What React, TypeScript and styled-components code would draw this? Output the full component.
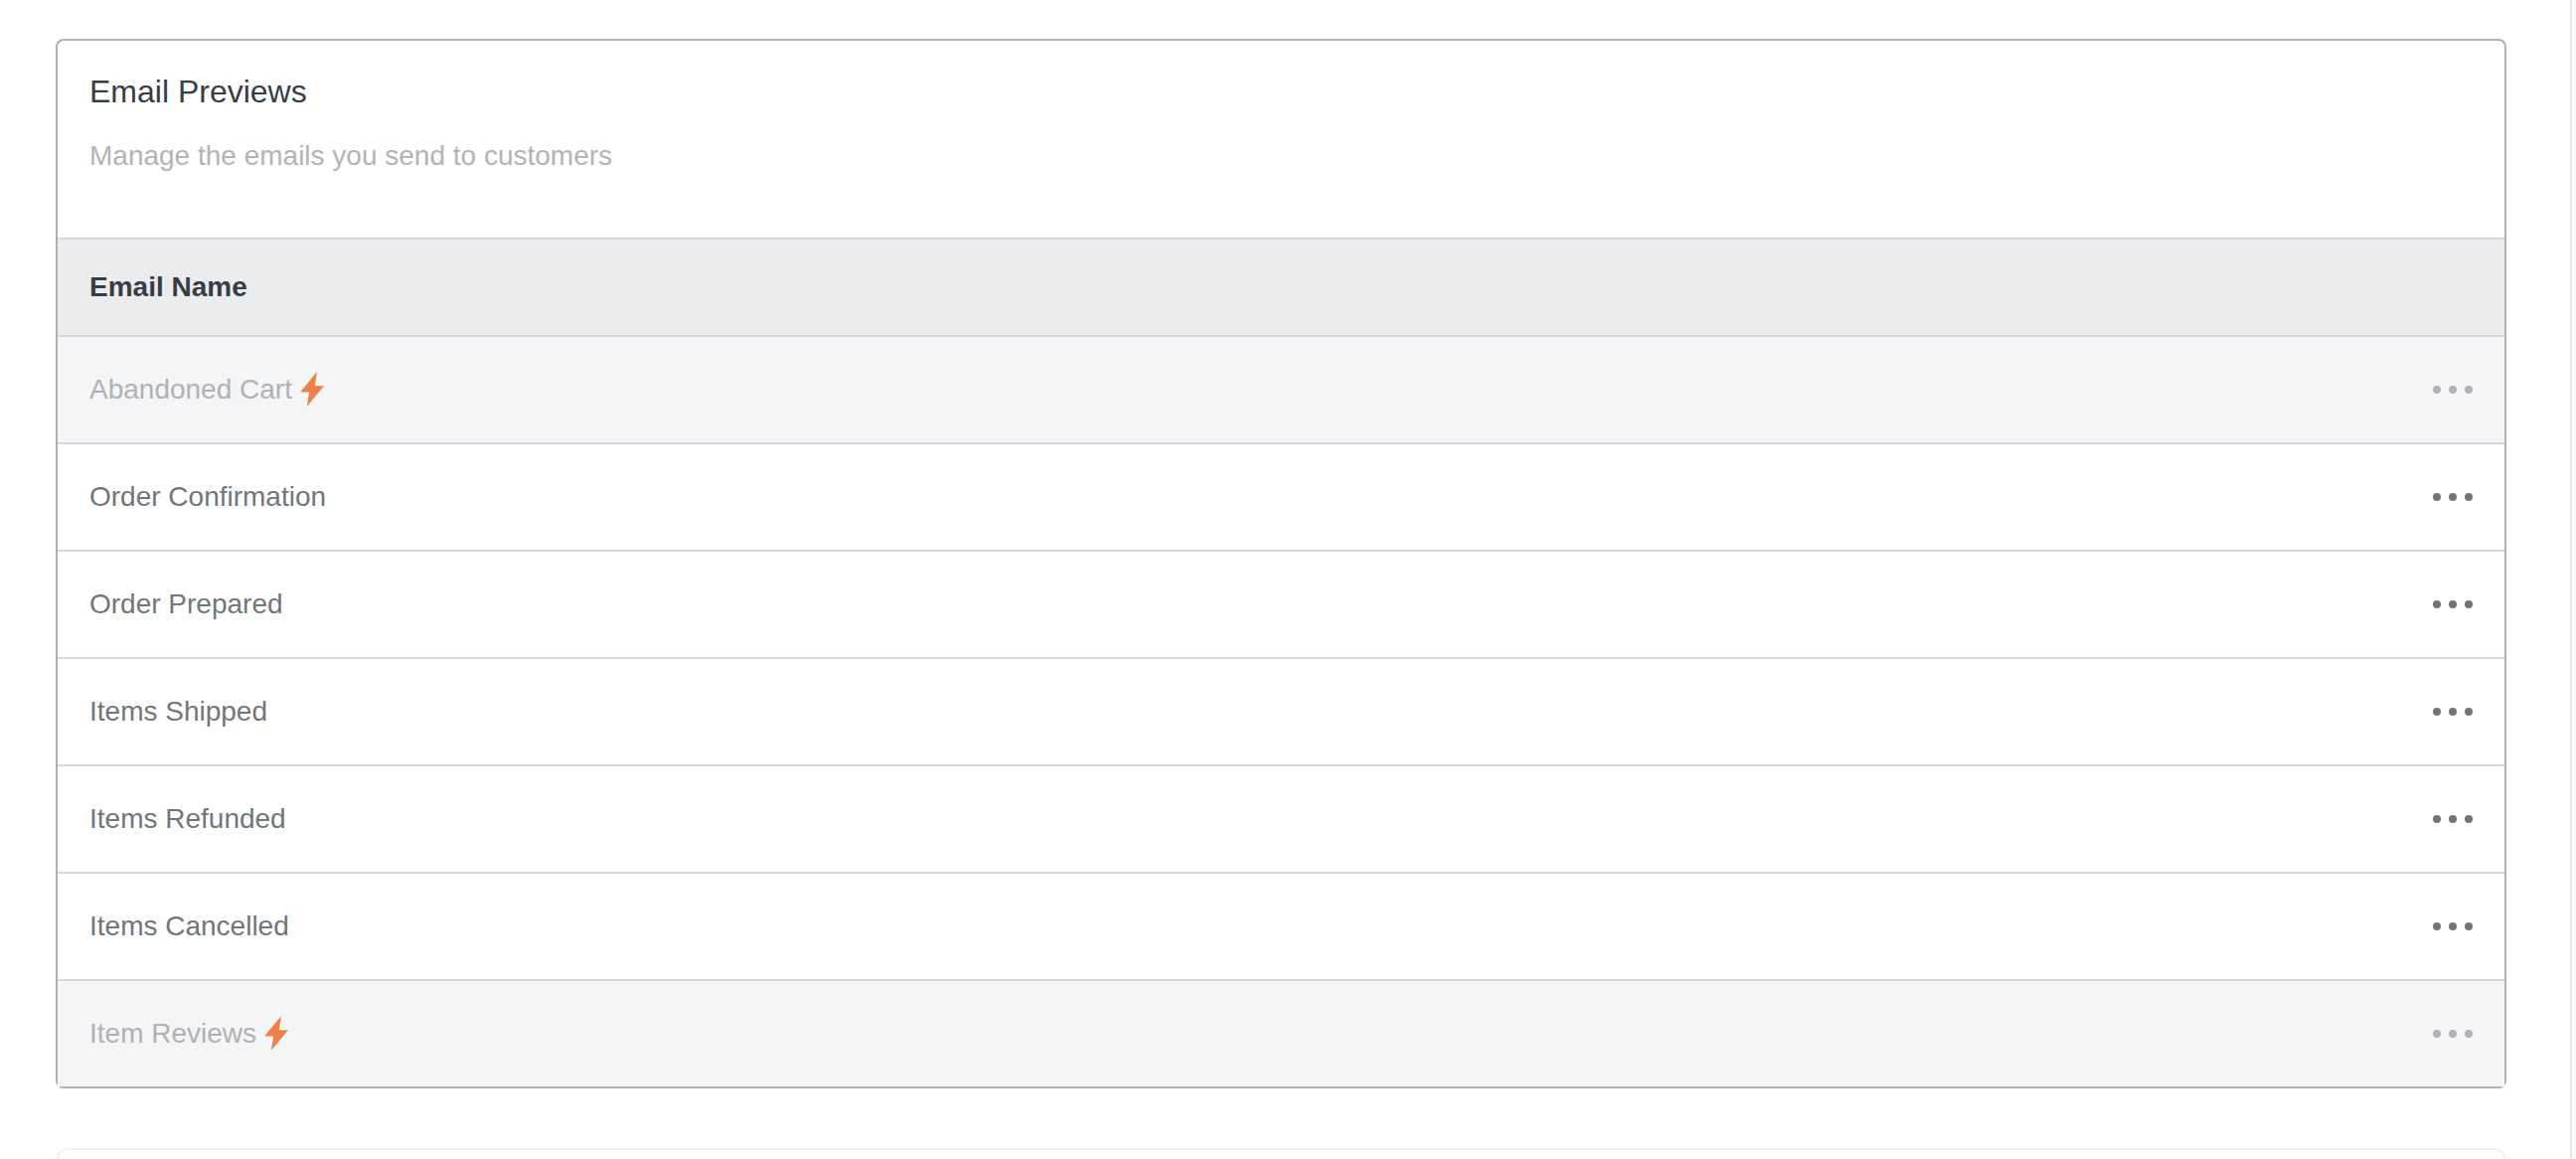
import React from "react";
import styled, { createGlobalStyle } from "styled-components";

const GlobalStyle = createGlobalStyle`
  *, *::before, *::after { box-sizing: border-box; }
  html, body, #root { height: 100%; }
  body {
    margin: 0;
    overflow: hidden;
    background: #fafafa;
    font-family: "Liberation Sans", Helvetica, Arial, sans-serif;
    font-size: 28px;
    line-height: 40px;
    color: #6f767c;
  }
`;

const Page = styled.main`
  display: flex;
  flex-direction: column;
  gap: 60px;
  height: 100%;
  margin-right: 4px;
  padding: 39px 64px 0 56px;
  overflow: hidden;
  background: #fff;
  border-right: 2px solid #e8e8e8;
`;

const Card = styled.section`
  flex: none;
  background: #fff;
  border: 2px solid #adb1b6;
  border-radius: 8px;
`;

const NextCard = styled.section`
  flex: none;
  height: 240px;
  border: 2px solid #f0f0f0;
  border-radius: 12px;
`;

const CardHeader = styled.header`
  display: flex;
  flex-direction: column;
  gap: 25px;
  padding: 31px 32px 62px;
`;

const Title = styled.h2`
  margin: 0;
  font-size: 32px;
  line-height: 40px;
  font-weight: 400;
  color: #353d46;
`;

const Subtitle = styled.p`
  margin: 0;
  color: #b0b3b8;
`;

const Table = styled.table`
  width: 100%;
  border-spacing: 0;
  border-collapse: separate;
`;

const HeadCell = styled.th`
  height: 98px;
  padding: 0 32px;
  border-top: 2px solid #d5d7da;
  background: #ebecee;
  color: #353d46;
  font-weight: 700;
  text-align: left;
`;

const Row = styled.tr<{ $muted?: boolean }>`
  background: ${(p) => (p.$muted ? "#f4f5f7" : "#fff")};
  color: ${(p) => (p.$muted ? "#b0b1b6" : "#6f767c")};
`;

const Cell = styled.td`
  height: 108px;
  padding: 0 32px;
  border-top: 2px solid #d5d7da;
`;

const Name = styled.div`
  display: flex;
  align-items: center;
  gap: 8px;
`;

const Actions = styled.div`
  display: flex;
  justify-content: flex-end;
`;

const MenuButton = styled.button`
  display: flex;
  gap: 8px;
  padding: 16px 0;
  border: 0;
  background: none;
  color: inherit;
  cursor: pointer;
`;

const Dot = styled.span`
  width: 8px;
  height: 8px;
  border-radius: 50%;
  background: currentColor;
`;

const Bolt = () => (
  <svg width="24" height="36" viewBox="0 0 24 36" aria-hidden="true">
    <path d="M17 0 0 20.5h9.2L6.8 35 24 14.2h-9.2z" fill="#f08047" />
  </svg>
);

const emails = [
  { name: "Abandoned Cart", premium: true },
  { name: "Order Confirmation" },
  { name: "Order Prepared" },
  { name: "Items Shipped" },
  { name: "Items Refunded" },
  { name: "Items Cancelled" },
  { name: "Item Reviews", premium: true },
];

export default function App() {
  return (
    <>
      <GlobalStyle />
      <Page>
        <Card>
          <CardHeader>
            <Title>Email Previews</Title>
            <Subtitle>Manage the emails you send to customers</Subtitle>
          </CardHeader>
          <Table>
            <thead>
              <tr>
                <HeadCell scope="col" colSpan={2}>Email Name</HeadCell>
              </tr>
            </thead>
            <tbody>
              {emails.map(({ name, premium }) => (
                <Row key={name} $muted={premium}>
                  <Cell>
                    <Name>
                      {name}
                      {premium && <Bolt />}
                    </Name>
                  </Cell>
                  <Cell>
                    <Actions>
                      <MenuButton type="button" aria-label={`Options for ${name}`}>
                        <Dot />
                        <Dot />
                        <Dot />
                      </MenuButton>
                    </Actions>
                  </Cell>
                </Row>
              ))}
            </tbody>
          </Table>
        </Card>
        <NextCard />
      </Page>
    </>
  );
}
